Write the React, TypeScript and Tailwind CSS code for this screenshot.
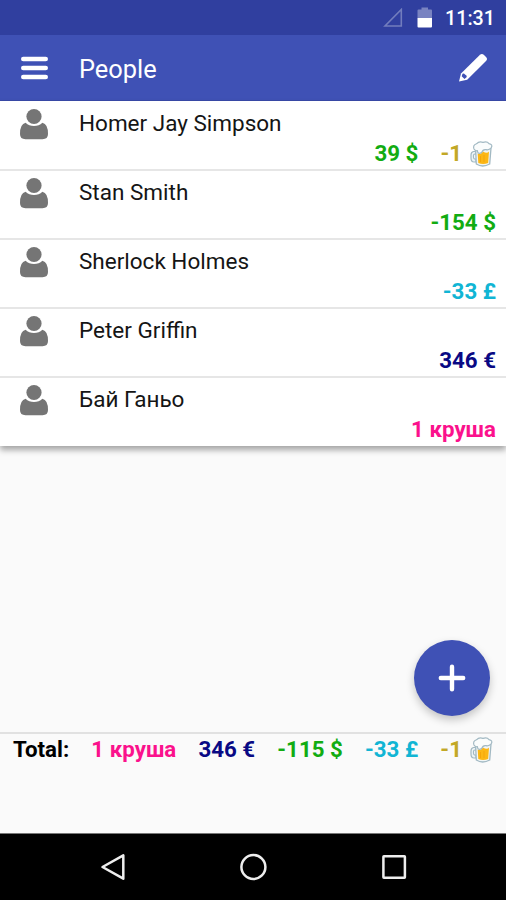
import React from "react";

const tones = {
  green: "text-[#12ac12]",
  gold: "text-[#c2a826]",
  cyan: "text-[#11b5d4]",
  navy: "text-[#090984]",
  pink: "text-[#fb118c]",
};

type Amount = { text: string; tone: keyof typeof tones; beer?: boolean };

const people: { name: string; amounts: Amount[] }[] = [
  { name: "Homer Jay Simpson", amounts: [{ text: "39 $", tone: "green" }, { text: "-1", tone: "gold", beer: true }] },
  { name: "Stan Smith", amounts: [{ text: "-154 $", tone: "green" }] },
  { name: "Sherlock Holmes", amounts: [{ text: "-33 £", tone: "cyan" }] },
  { name: "Peter Griffin", amounts: [{ text: "346 €", tone: "navy" }] },
  { name: "Бай Ганьо", amounts: [{ text: "1 круша", tone: "pink" }] },
];

const totals: Amount[] = [
  { text: "1 круша", tone: "pink" },
  { text: "346 €", tone: "navy" },
  { text: "-115 $", tone: "green" },
  { text: "-33 £", tone: "cyan" },
  { text: "-1", tone: "gold", beer: true },
];

function Beer() {
  return (
    <svg className="mt-[1px] mr-[1px] ml-[7px] h-[28px] w-[26px] shrink-0" viewBox="0 0 26 28" fill="none">
      <path d="M7 11.5H4.5Q2 12 2 15V18Q2 22 5 22H7V19H5.5Q4.5 18.5 4.5 17V15.5Q4.5 14 6 14H7Z" fill="#edf4f7" stroke="#a2b9c3" strokeWidth="1.2" />
      <path d="M6.5 7.5L7.3 24Q13.5 28 20.7 24L22 8Z" fill="#f1f6f7" stroke="#a2b9c3" strokeWidth="1.3" />
      <path d="M8.7 13.5Q12 15 14 11.5Q18 14 20 11.5L19.2 23Q14 25 9.3 23Z" fill="#fcb716" />
      <path d="M11.5 16V22M15 15V22" stroke="#f5a60b" strokeWidth="1" />
      <path d="M5 9Q3.5 5 7.5 3.8Q10 1 14 2.4Q18 1 20 3.6Q24 4.5 22.4 7.5Q20 10.5 17 9.7Q14 9 12.6 12.6Q9 15 8.3 10.7Q6 11 5 9Z" fill="#fafcfc" stroke="#a2b9c3" strokeWidth="1.2" />
    </svg>
  );
}

function Money({ amount }: { amount: Amount }) {
  return (
    <span className={`flex h-[28px] items-center whitespace-nowrap text-[22.3px] leading-[28px] font-bold ${tones[amount.tone]}`}>
      {amount.text}
      {amount.beer && <Beer />}
    </span>
  );
}

function Person() {
  return (
    <svg className="mt-[6px] ml-5 h-[32px] w-[28px] shrink-0" viewBox="0 0 28 32" fill="#757575">
      <circle cx="14" cy="8.5" r="7.6" />
      <path d="M5.6 14.8Q9 18 14 18T22.4 14.8Q28 16 28 26Q28 31.2 22.5 31.2H5.5Q0 31.2 0 26Q0 16 5.6 14.8Z" />
    </svg>
  );
}

export default function App() {
  return (
    <div className="flex h-[900px] w-[506px] flex-col overflow-hidden bg-[#fafafa] font-[Roboto,sans-serif]">
      <div className="flex h-[35px] shrink-0 items-center justify-end bg-[#303f9f] pr-[11px] text-white">
        <svg className="h-[20px] w-[20px]" viewBox="0 0 20 20" fill="none">
          <path d="M2 18H18.3V1.5Z" stroke="#727dbd" strokeWidth="1.6" />
        </svg>
        <svg className="ml-[14px] h-[21px] w-[16px]" viewBox="0 0 16 21">
          <path d="M0.5 3.5Q0.5 2.5 1.5 2.5H4.5V0.5H11V2.5H14Q15 2.5 15 3.5V11H0.5Z" fill="#7983c1" />
          <path d="M0.5 11H15V19.5Q15 20.5 14 20.5H1.5Q0.5 20.5 0.5 19.5Z" fill="white" />
        </svg>
        <span className="mt-[2px] ml-[12px] text-[19.7px] leading-none font-medium">11:31</span>
      </div>
      <header className="flex h-[66px] shrink-0 items-center border-b border-[#3949a8] bg-[#3f51b5] text-white">
        <svg className="ml-[20px] h-[26px] w-[28px]" viewBox="0 0 28 26" stroke="white" strokeWidth="4.6" strokeLinecap="round">
          <path d="M3.3 4H25.7M3.3 13H25.7M3.3 22H25.7" />
        </svg>
        <h1 className="mt-[4px] ml-[31px] text-[25.4px] leading-none">People</h1>
        <svg className="mr-[18px] ml-auto h-[30px] w-[30px]" viewBox="0 0 30 30">
          <path d="M1 28.5L3 20.5L22 1.8Q24 0 26 2L28 4Q30 6 28 8L9.2 26.8Z" fill="white" />
          <path d="M4.5 20.8Q6 20 7 21.5Q9 22 8.8 24L6.5 26L3.7 23.3Z" fill="#3f51b5" />
        </svg>
      </header>
      <main className="h-[345px] shrink-0 bg-white pt-[1px] shadow-[0_4px_6px_rgba(0,0,0,0.34)]">
        {people.map((person) => (
          <div key={person.name} className="flex h-[69px] border-b-2 border-[#e6e6e6] last:h-[68px] last:border-transparent">
            <Person />
            <div className="flex flex-1 flex-col pr-[10px] pl-[31px]">
              <span className="mt-[6px] mb-[1px] text-[22.5px] leading-[30px] text-[#151515]">{person.name}</span>
              <div className="flex justify-end gap-[22px]">
                {person.amounts.map((a) => <Money key={a.text} amount={a} />)}
              </div>
            </div>
          </div>
        ))}
      </main>
      <div className="flex flex-1 items-end justify-end pr-4 pb-4">
        <button aria-label="Add person" className="flex h-[76px] w-[76px] items-center justify-center rounded-full bg-[#3f51b5] shadow-[0_4px_9px_rgba(0,0,0,0.22)]">
          <svg className="h-[28px] w-[28px]" viewBox="0 0 28 28" stroke="white" strokeWidth="4.4" strokeLinecap="round">
            <path d="M14 2.8V25.2M2.8 14H25.2" />
          </svg>
        </button>
      </div>
      <footer className="flex h-[101px] shrink-0 justify-between border-t-2 border-[#e1e1e1] pt-[1px] pr-[10px] pl-[13px]">
        <span className="text-[22.3px] leading-[28px] font-bold text-black">Total:</span>
        {totals.map((a) => <Money key={a.text} amount={a} />)}
      </footer>
      <nav className="flex h-[67px] shrink-0 items-center justify-center gap-[112px] border-t border-[#777] bg-black">
        <svg className="h-[30px] w-[28px]" viewBox="0 0 28 30" fill="none" stroke="#eee" strokeWidth="2.5" strokeLinejoin="round">
          <path d="M3.5 15L24.3 3.3V26.7Z" />
        </svg>
        <svg className="h-[30px] w-[28px]" viewBox="0 0 28 30" fill="none" stroke="#eee" strokeWidth="2.5">
          <circle cx="14.4" cy="15" r="12" />
        </svg>
        <svg className="h-[30px] w-[28px]" viewBox="0 0 28 30" fill="none" stroke="#eee" strokeWidth="2.5">
          <rect x="4.4" y="4.3" width="21.5" height="21.5" rx="0.5" />
        </svg>
      </nav>
    </div>
  );
}
